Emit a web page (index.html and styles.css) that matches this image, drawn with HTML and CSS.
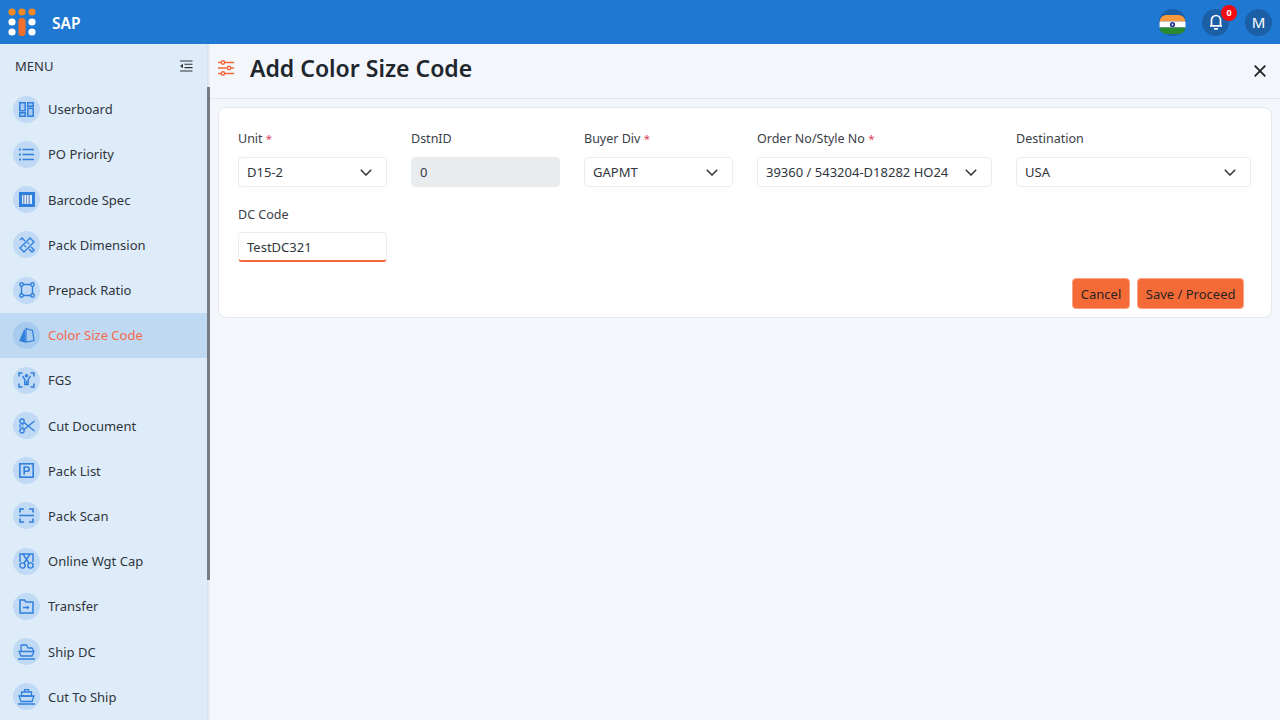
FILE: index.html
```html
<!DOCTYPE html>
<html lang="en">
<head>
<meta charset="utf-8">
<title>Add Color Size Code</title>
<link rel="stylesheet" href="styles.css">
</head>
<body>
<header class="topbar">
  <div class="brand">
    <svg class="logo" width="30" height="30" viewBox="0 0 30 30">
      <circle cx="4" cy="4" r="3.6" fill="#f58a25"/><circle cx="14" cy="4" r="3.6" fill="#f58a25"/><circle cx="24" cy="4" r="3.6" fill="#f58a25"/>
      <circle cx="4" cy="14" r="3.6" fill="#fff"/><rect x="10.4" y="10" width="7.2" height="18" rx="3.6" fill="#f26f2c"/><circle cx="24" cy="14" r="3.6" fill="#fff"/>
      <circle cx="4" cy="24" r="3.6" fill="#fff"/><circle cx="24" cy="24" r="3.6" fill="#fff"/>
    </svg>
    <span class="brand-name">SAP</span>
  </div>
  <div class="top-actions">
    <div class="round">
      <svg width="27" height="27" viewBox="0 0 27 27">
        <clipPath id="fl"><rect x="0.5" y="6" width="26" height="19" rx="7"/></clipPath>
        <g clip-path="url(#fl)"><rect y="6" width="27" height="6.5" fill="#fb9a3c"/><rect y="12.5" width="27" height="6" fill="#fff"/><rect y="18.5" width="27" height="6.5" fill="#2a8a2e"/></g>
        <circle cx="13.5" cy="15.5" r="2.6" fill="#23319a"/><circle cx="13.5" cy="15.5" r="0.9" fill="#fff"/>
      </svg>
    </div>
    <div class="round bell">
      <svg width="14" height="16" viewBox="0 0 14 16" fill="none" stroke="#fff" stroke-width="1.7"><path d="M2.500 11.500V6a4.500 4.500 0 0 1 9 0v5.500M1 11.800h12"/><path d="M5.800 14.800h2.400" stroke-linecap="round" stroke-width="1.800"/></svg>
      <span class="badge">0</span>
    </div>
    <div class="round initial">M</div>
  </div>
</header>

<div class="shell">
  <aside class="sidebar">
    <div class="menu-head">
      <span>MENU</span>
      <svg width="14" height="12" viewBox="0 0 14 12" fill="none" stroke="#333" stroke-width="1.1"><path d="M1 1h12.500M5.500 4.300h8M5.500 7.600h8M1 11h12.500"/><path d="M4 3.800L1 6l3 2.200z" fill="#333" stroke="none"/></svg>
    </div>
    <nav class="menu">
      <a class="item"><span class="ico"><svg width="15" height="15" viewBox="0 0 15 15" fill="#a9cbf2" stroke="#2f7fdc" stroke-width="1.500"><rect x=".75" y=".75" width="5.500" height="8"/><rect x="8.750" y=".75" width="5.500" height="3.500"/><rect x=".75" y="10.750" width="5.500" height="3.500"/><rect x="8.750" y="6.250" width="5.500" height="8"/></svg></span>Userboard</a>
      <a class="item"><span class="ico"><svg width="15" height="13" viewBox="0 0 15 13" fill="none" stroke="#2f7fdc" stroke-width="1.400"><path d="M3.500 1.500H15M3.500 6.500H15M3.500 11.500H15"/><path d="M0 1.500h1.800M0 6.500h1.800M0 11.500h1.800" stroke-width="2"/></svg></span>PO Priority</a>
      <a class="item"><span class="ico"><svg width="16" height="15" viewBox="0 0 16 15"><rect width="16" height="15" fill="#2f7fdc"/><rect x="3" y="3" width="10" height="9" fill="#dbe8f7"/><path d="M4 3h1.500v9H4zM7 3h1v9H7zM9.500 3h1.500v9H9.500z" fill="#7f9fd8"/></svg></span>Barcode Spec</a>
      <a class="item"><span class="ico"><svg width="16" height="16" viewBox="0 0 16 16" fill="none" stroke="#2f7fdc" stroke-width="1.400"><path d="M11 1l4 4L5 15l-4-4z"/><path d="M1 3l2-2 3 3M10 12l3 3 2-2-3-3M8.500 5.500L10 7M5.500 8.500L7 10"/></svg></span>Pack Dimension</a>
      <a class="item"><span class="ico"><svg width="16" height="16" viewBox="0 0 16 16" fill="none" stroke="#2f7fdc" stroke-width="1.400"><path d="M3 2.500h10M3 13.500h10M2.500 3v10M13.500 3v10"/><circle cx="2.500" cy="2.500" r="1.700" fill="#cfe2f6"/><circle cx="13.500" cy="2.500" r="1.700" fill="#cfe2f6"/><circle cx="2.500" cy="13.500" r="1.700" fill="#cfe2f6"/><circle cx="13.500" cy="13.500" r="1.700" fill="#cfe2f6"/></svg></span>Prepack Ratio</a>
      <a class="item active"><span class="ico"><svg width="16" height="16" viewBox="0 0 16 16" stroke="#2f7fdc" stroke-width="1.200"><path d="M5.500 3L1 13.500l5 1.500z" fill="#2f7fdc"/><path d="M7 1.500l6.500 2L15 13.500 7 15z" fill="#a6cbef"/></svg></span>Color Size Code</a>
      <a class="item"><span class="ico"><svg width="17" height="16" viewBox="0 0 17 16" fill="none" stroke="#2f7fdc" stroke-width="1.500"><path d="M1 4.500V1h3.500M12.500 1H16v3.500M1 11.500V15h3.500M12.500 15H16v-3.500"/><circle cx="8.500" cy="3.800" r="1.800" fill="#2f7fdc" stroke="none"/><path d="M4.500 4l2.300 3.500V12.500h3.400V7.500L12.500 4" stroke-width="1.400"/><path d="M8.500 8.500v4"/></svg></span>FGS</a>
      <a class="item"><span class="ico"><svg width="16" height="16" viewBox="0 0 16 16" fill="none" stroke="#2f7fdc" stroke-width="1.400"><circle cx="3" cy="3.200" r="2.200"/><circle cx="3" cy="12.800" r="2.200"/><path d="M5 4.500L15.500 13M5 11.500L15.500 3"/><path d="M0 6.800h5M0 8h2M0 9.200h5" stroke-width=".8"/></svg></span>Cut Document</a>
      <a class="item"><span class="ico"><svg width="15" height="15" viewBox="0 0 15 15" fill="none" stroke="#2f7fdc" stroke-width="1.600"><rect x=".8" y=".8" width="13.400" height="13.400"/><path d="M5.200 11.500V4h2.800a2.100 2.100 0 0 1 0 4.300H5.200"/></svg></span>Pack List</a>
      <a class="item"><span class="ico"><svg width="15" height="15" viewBox="0 0 15 15" fill="none" stroke="#2f7fdc" stroke-width="1.600"><path d="M1 4.500V1h4M10 1h4v3.500M1 10.500V14h4M10 14h4v-3.500M0 7.500h15"/></svg></span>Pack Scan</a>
      <a class="item"><span class="ico"><svg width="15" height="16" viewBox="0 0 15 16" fill="none" stroke="#2f7fdc" stroke-width="1.400"><path d="M1 9V1h13v8"/><path d="M4 1l5.800 9M11 1L5.200 10"/><circle cx="3.500" cy="12.500" r="2.600"/><circle cx="11.500" cy="12.500" r="2.600"/></svg></span>Online Wgt Cap</a>
      <a class="item"><span class="ico"><svg width="15" height="15" viewBox="0 0 15 15" fill="none" stroke="#2f7fdc" stroke-width="1.500"><path d="M1 14V1h4.500l1.500 2h7v11z"/><path d="M4 8.500h5"/><path d="M8 6.500l2.500 2-2.500 2z" fill="#2f7fdc" stroke="none"/></svg></span>Transfer</a>
      <a class="item"><span class="ico"><svg width="17" height="16" viewBox="0 0 17 16" fill="none" stroke="#2f7fdc" stroke-width="1.300"><path d="M3 1h5.500L10 4h4l2 3.500L14 12H3L1 7.500h15M3 7V1"/><path d="M0 15h17" stroke-width="1.500"/></svg></span>Ship DC</a>
      <a class="item"><span class="ico"><svg width="17" height="16" viewBox="0 0 17 16" fill="none" stroke="#2f7fdc" stroke-width="1.300"><path d="M6.500.7h4V3h-4zM3.500 3h10v4h-10z"/><path d="M1 7h15l-2 5.500H3z"/><path d="M0 15h17" stroke-width="1.500"/></svg></span>Cut To Ship</a>
    </nav>
    <div class="scrollbar"></div>
  </aside>

  <main class="content">
    <div class="page-head">
      <svg class="head-icon" width="18" height="16" viewBox="0 0 18 16" fill="none" stroke="#f4693a" stroke-width="1.400"><path d="M1 2.500h3M8 2.500h9M1 8h9M14 8h3M1 13.500h3M8 13.500h9"/><circle cx="6" cy="2.500" r="1.700"/><circle cx="12" cy="8" r="1.700"/><circle cx="6" cy="13.500" r="1.700"/></svg>
      <h1>Add Color Size Code</h1>
      <svg class="close" width="12" height="12" viewBox="0 0 12 12" stroke="#222" stroke-width="1.800"><path d="M.7.7l10.600 10.600M11.300.7L.7 11.300"/></svg>
    </div>
    <section class="card">
      <div class="form-grid">
        <div class="field"><label>Unit <i>*</i></label><div class="control"><span>D15-2</span><svg class="chev" width="12" height="7" viewBox="0 0 12 7" fill="none" stroke="#333" stroke-width="1.500"><path d="M.8.8L6 6l5.200-5.200"/></svg></div></div>
        <div class="field"><label>DstnID</label><div class="control disabled"><span>0</span></div></div>
        <div class="field"><label>Buyer Div <i>*</i></label><div class="control"><span>GAPMT</span><svg class="chev" width="12" height="7" viewBox="0 0 12 7" fill="none" stroke="#333" stroke-width="1.500"><path d="M.8.8L6 6l5.200-5.200"/></svg></div></div>
        <div class="field"><label>Order No/Style No <i>*</i></label><div class="control"><span>39360 / 543204-D18282 HO24</span><svg class="chev" width="12" height="7" viewBox="0 0 12 7" fill="none" stroke="#333" stroke-width="1.500"><path d="M.8.8L6 6l5.200-5.200"/></svg></div></div>
        <div class="field"><label>Destination</label><div class="control"><span>USA</span><svg class="chev" width="12" height="7" viewBox="0 0 12 7" fill="none" stroke="#333" stroke-width="1.500"><path d="M.8.8L6 6l5.200-5.200"/></svg></div></div>
        <div class="field"><label>DC Code</label><div class="control touched"><span>TestDC321</span></div></div>
      </div>
      <div class="actions">
        <button class="btn">Cancel</button>
        <button class="btn">Save / Proceed</button>
      </div>
    </section>
  </main>
</div>
</body>
</html>
```
FILE: styles.css
```css
* { box-sizing: border-box; }
html, body { margin: 0; height: 100%; overflow: hidden; }
body { font-family: "Noto Sans", "Open Sans", sans-serif; font-size: 13px; color: #2f353c; background: #f3f7fc; display: flex; flex-direction: column; }

.topbar { height: 44px; flex: none; background: #1f78d2; display: flex; align-items: center; justify-content: space-between; padding: 0 8px; }
.brand { display: flex; align-items: center; }
.logo { margin-top: 2px; }
.brand-name { margin-left: 14px; padding-top: 1px; color: #fff; font-weight: 600; font-size: 15.500px; }
.top-actions { display: flex; gap: 16px; }
.round { position: relative; width: 27px; height: 27px; border-radius: 50%; background: #1b5fa6; color: #fff; display: flex; align-items: center; justify-content: center; font-size: 14px; }
.initial { font-size: 15px; }
.badge { position: absolute; top: -4px; right: -8px; width: 16px; height: 16px; border-radius: 50%; background: #f50b12; color: #fff; font-size: 9px; font-weight: 700; display: flex; align-items: center; justify-content: center; }

.shell { flex: 1; display: flex; min-height: 0; }
.sidebar { position: relative; width: 210px; flex: none; background: #deebf9; overflow: hidden; }
.sidebar::after { content: ""; position: absolute; right: 0; top: 0; bottom: 0; width: 3px; background: linear-gradient(90deg, #d5dde6, #eef2f8); }
.menu-head { height: 42.700px; display: flex; align-items: center; justify-content: space-between; padding: 1px 17px 0 15px; font-size: 13px; color: #30343a; }
.menu { display: flex; flex-direction: column; margin-right: 3px; }
.item { height: 45.200px; display: flex; align-items: center; gap: 8px; padding-left: 13px; color: #2f353c; }
.ico { width: 27px; height: 27px; border-radius: 50%; background: #c0daf5; display: flex; align-items: center; justify-content: center; }
.item.active { background: #c0d9f3; color: #f4694a; }
.item.active .ico { background: #a6cbef; }
.scrollbar { position: absolute; z-index: 1; right: 0; top: 43px; width: 3px; height: 493px; background: #757b82; }

.content { flex: 1; min-width: 0; display: flex; flex-direction: column; padding-right: 8px; }
.page-head { height: 55px; margin-right: -8px; border-bottom: 1px solid #e2e7ee; display: flex; align-items: center; padding: 0 14px 7px 8px; }
.head-icon { margin-left: -1px; margin-right: 1px; }
.page-head h1 { margin: 0 0 0 14px; font-size: 23px; font-weight: 600; color: #20262c; }
.close { margin-left: auto; position: relative; top: 3px; }
.card { margin: 8px 0 0 8px; height: 211px; background: #fff; border: 1px solid #e3e7ee; border-radius: 8px; padding: 22px 19px 0 19px; display: flex; flex-direction: column; }
.form-grid { display: grid; grid-template-columns: 149px 149px 149px 235px 235px; column-gap: 24px; row-gap: 19px; }
.field label { display: block; height: 18px; line-height: 18px; margin-bottom: 9px; font-size: 12.500px; color: #3a4048; }
.field:nth-child(n+6) label { margin-bottom: 8px; }
.field label i { color: #e2405a; font-style: normal; font-size: 11.500px; }
.control { height: 30px; background: #fff; border: 1px solid #ebedf0; border-radius: 4px; display: flex; align-items: center; justify-content: space-between; padding: 0 14px 0 8px; font-size: 13px; color: #30363c; }
.control.disabled { background: #e9ecef; border-color: #e9ecef; }
.control.touched { border-bottom: 2px solid #f4693a; }
.actions { margin-top: auto; margin-bottom: 8px; display: flex; justify-content: flex-end; gap: 7.500px; padding-right: 8px; }
.btn { height: 31px; padding: 0 7.500px; background: #f56b38; border: 1px solid #f9a184; border-radius: 4px; font: inherit; font-size: 13px; color: #2a2320; }
```
